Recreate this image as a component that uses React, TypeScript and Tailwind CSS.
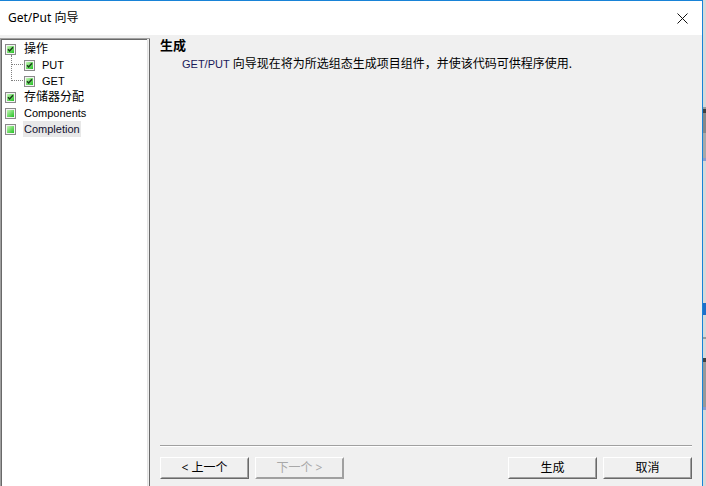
import React from "react";

const cjk = { fontFamily: '"Noto Sans", "Noto Sans CJK SC", sans-serif' };
const latin = { fontFamily: 'Tahoma, "Liberation Sans", "Noto Sans CJK SC", sans-serif' };

function CheckBox({ checked }: { checked: boolean }) {
  return (
    <svg width="11" height="11" viewBox="0 0 11 11" className="shrink-0">
      <defs>
        <linearGradient id={checked ? "gc" : "gu"} x1="0" y1="0" x2="1" y2="1">
          <stop offset="0" stopColor="#c8f8b8" />
          <stop offset="1" stopColor="#22c022" />
        </linearGradient>
      </defs>
      <rect x="0.5" y="0.5" width="10" height="10" fill="#f4f4f4" stroke="#8a8a8a" />
      <rect x="2" y="2" width="7" height="7" fill={`url(#${checked ? "gc" : "gu"})`} />
      {checked ? <path d="M3 5.2 L4.6 7 L8 3.2" fill="none" stroke="#1c3b1c" strokeWidth="1.4" /> : null}
    </svg>
  );
}

type Item = { label: string; checked: boolean; child?: boolean; selected?: boolean; small?: boolean };

const items: Item[] = [
  { label: "操作", checked: true },
  { label: "PUT", checked: true, child: true, small: true },
  { label: "GET", checked: true, child: true, small: true },
  { label: "存储器分配", checked: true },
  { label: "Components", checked: false, small: true },
  { label: "Completion", checked: false, small: true, selected: true },
];

function TreeRow({ item }: { item: Item }) {
  return (
    <div className={`relative flex h-[16px] items-center ${item.child ? "pl-[22px]" : "pl-[3px]"}`}>
      {item.child ? (
        <span className="absolute left-[9px] top-[7px] w-[12px] border-t border-dotted border-[#808080]" />
      ) : null}
      <CheckBox checked={item.checked} />
      <span
        className={`${item.child ? "ml-[6px]" : "ml-[7px]"} px-[1px] leading-[16px] ${item.small ? "text-[11px]" : "text-[12px]"} ${
          item.selected ? "bg-[#e8e8e8] text-[#101030]" : "text-black"
        }`}
        style={item.small ? latin : cjk}
      >
        {item.label}
      </span>
    </div>
  );
}

function Button({ label, disabled }: { label: string; disabled?: boolean }) {
  return (
    <div
      className={`flex h-[22px] w-[89px] items-center justify-center border border-t-white border-l-white ${
        disabled ? "border-r-[#a0a0a0] border-b-[#a0a0a0] bg-[#efefef]" : "border-r-[#696969] border-b-[#696969] bg-[#f0f0f0]"
      }`}
    >
      <div
        className={`flex h-full w-full items-center justify-center border border-transparent ${
          disabled ? "border-b-[#a0a0a0] border-r-[#a0a0a0] text-[#a8a8a8]" : "border-b-[#a0a0a0] border-r-[#a0a0a0] text-black"
        } text-[12px]`}
        style={cjk}
      >
        {label}
      </div>
    </div>
  );
}

export default function App() {
  return (
    <div className="flex h-[486px] w-[706px] overflow-hidden bg-[#f0f0f0]">
      <div className="flex h-full w-[703px] flex-col border-t border-r border-[#1883d7]">
        <div className="flex h-[34px] items-center justify-between bg-white pl-[8px] pr-[14px]">
          <span className="text-[12px] text-black" style={cjk}>
            Get/Put 向导
          </span>
          <svg width="11" height="11" viewBox="0 0 11 11">
            <path d="M0.5 0.5 L10.5 10.5 M10.5 0.5 L0.5 10.5" stroke="#111" strokeWidth="1" />
          </svg>
        </div>
        <div className="flex flex-1 pt-[3px]">
          <div className="flex w-[150px] border-l border-t border-[#a0a0a0] border-r-0">
            <div className="flex-1 border-l border-t border-[#696969] bg-white pt-[1px]">
              <div className="relative">
                <span className="absolute left-[9px] top-[14px] h-[26px] border-l border-dotted border-[#808080]" />
                {items.map((it) => (
                  <TreeRow key={it.label} item={it} />
                ))}
              </div>
            </div>
            <div className="w-[1px] bg-[#e3e3e3]" />
            <div className="w-[1px] bg-[#f0f0f0]" />
            <div className="w-[1px] bg-[#696969]" />
          </div>
          <div className="flex flex-1 flex-col pl-[10px] pr-[10px]">
            <div className="-mt-[1px] text-[13px] font-bold leading-[16px] text-black" style={cjk}>
              生成
            </div>
            <div className="mt-[3px] pl-[22px] text-[12px] leading-[16px] text-black" style={cjk}>
              <span className="text-[11px] text-[#1a1a5a]" style={latin}>
                GET/PUT
              </span>{" "}
              向导现在将为所选组态生成项目组件，并使该代码可供程序使用.
            </div>
            <div className="flex-1" />
            <div className="border-t border-[#a0a0a0] border-b border-b-white" />
            <div className="flex items-center pt-[10px] pb-[7px]">
              <Button label="< 上一个" />
              <div className="w-[6px]" />
              <Button label="下一个 >" disabled />
              <div className="flex-1" />
              <Button label="生成" />
              <div className="w-[6px]" />
              <Button label="取消" />
            </div>
          </div>
        </div>
      </div>
      <div className="flex w-[3px] flex-col bg-[#d8d8d8]">
        <div className="h-[107px]" />
        <div className="h-[2px] bg-[#9a9a9a]" />
        <div className="h-[4px] bg-[#404040]" />
        <div className="h-[20px] bg-[#888888]" />
        <div className="h-[25px] bg-[#a9a9a9]" />
        <div className="h-[3px] bg-[#8c9ccc]" />
        <div className="h-[142px]" />
        <div className="h-[12px] bg-[#1e6fc8]" />
        <div className="h-[22px]" />
        <div className="h-[2px] bg-[#9a9a9a]" />
        <div className="h-[19px]" />
        <div className="h-[4px] bg-[#404040]" />
        <div className="h-[45px] bg-[#999999]" />
        <div className="h-[3px] bg-[#8c9ccc]" />
      </div>
    </div>
  );
}
